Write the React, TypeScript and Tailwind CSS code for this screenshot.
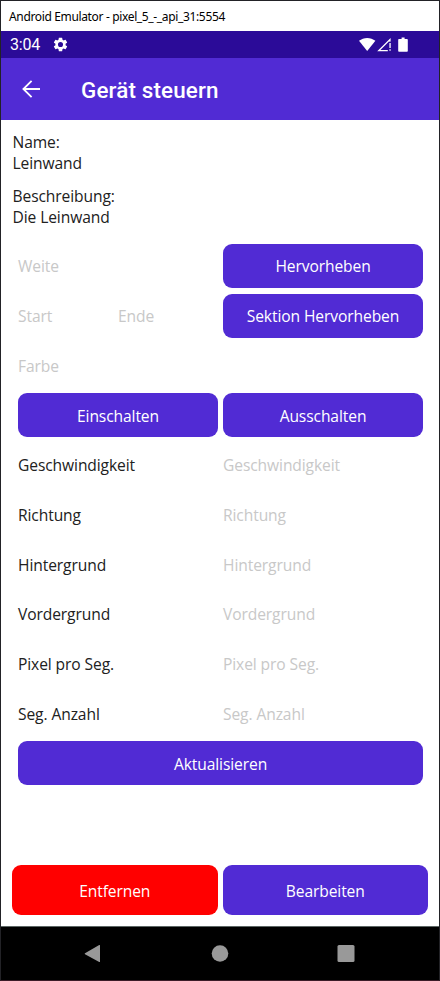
import type { ReactNode } from "react";

function Button({ children, className = "" }: { children: ReactNode; className?: string }) {
  return (
    <button className={`flex items-center justify-center rounded-[9px] pt-0.5 text-white ${className}`}>
      {children}
    </button>
  );
}

function Hint({ children }: { children: ReactNode }) {
  return <span className="flex-1 pt-0.5 text-[#c8c8c8]">{children}</span>;
}

const settings = [
  "Geschwindigkeit",
  "Richtung",
  "Hintergrund",
  "Vordergrund",
  "Pixel pro Seg.",
  "Seg. Anzahl",
];

function Row({ children }: { children: ReactNode }) {
  return <div className="grid h-[49.73px] grid-cols-2 items-center gap-[5px]">{children}</div>;
}

export default function App() {
  return (
    <div className="flex h-[981px] w-[440px] flex-col border border-[#222226] border-b-[#3b1c28] bg-white font-['Open_Sans','Noto_Sans',sans-serif] text-[15.6px] leading-[21px] tracking-[-0.1px] text-[#212121]">
      <div className="flex h-[30px] shrink-0 items-center pl-2 font-['Noto_Sans',sans-serif] text-[12px] tracking-[-0.35px] text-black">
        Android Emulator - pixel_5_-_api_31:5554
      </div>

      <div className="flex h-[27px] shrink-0 items-center bg-[#2b0b98] pl-[9px] pr-[30px] font-[Roboto,sans-serif] text-[16px] text-white">
        <span className="tracking-[-0.2px]">3:04</span>
        <svg className="ml-[12px] size-[17px]" viewBox="0 0 24 24" fill="currentColor">
          <path d="M19.14 12.94c.04-.3.06-.61.06-.94 0-.32-.02-.64-.07-.94l2.03-1.58a.49.49 0 0 0 .12-.61l-1.92-3.32a.488.488 0 0 0-.59-.22l-2.39.96c-.5-.38-1.03-.7-1.62-.94l-.36-2.54a.484.484 0 0 0-.48-.41h-3.84c-.24 0-.43.17-.47.41l-.36 2.54c-.59.24-1.13.57-1.62.94l-2.39-.96a.48.48 0 0 0-.59.22L2.74 8.87c-.12.21-.08.47.12.61l2.03 1.58c-.05.3-.09.63-.09.94s.02.64.07.94l-2.03 1.58a.49.49 0 0 0-.12.61l1.92 3.32c.12.22.37.29.59.22l2.39-.96c.5.38 1.03.7 1.62.94l.36 2.54c.05.24.24.41.48.41h3.84c.24 0 .44-.17.47-.41l.36-2.54c.59-.24 1.13-.56 1.62-.94l2.39.96c.22.08.47 0 .59-.22l1.92-3.32c.12-.22.07-.47-.12-.61l-2.01-1.58zM12 15.6A3.6 3.6 0 1 1 12 8.400a3.6 3.6 0 0 1 0 7.200z" />
        </svg>
        <svg className="ml-auto h-[15px] w-[50px]" viewBox="0 0 50 15" fill="currentColor">
          <path d="M0 3.8C4.7-.1 11.7-.1 16.4 3.8L8.2 14Z" />
          <path d="M31.6 1v3.5L30.4 5v-1L21.4 13h7.4v1.2H18.2Z" />
          <path d="M30.4 6h1.3v5h-1.3zM30.4 12.3h1.3v1.5h-1.3z" />
          <path d="M40 1.9h2.6V.5h3v1.4h2.4c.5 0 .8.3.8.8v11.2c0 .5-.3.8-.8.8h-8c-.5 0-.8-.3-.8-.8V2.7c0-.5.3-.8.8-.8Z" />
        </svg>
      </div>

      <div className="flex h-[62px] shrink-0 items-center bg-[#512bd4] pl-[21px] text-white">
        <svg className="mb-px size-[18px]" viewBox="0 0 18 18" fill="none" stroke="currentColor" strokeWidth="1.8">
          <path d="M18 9H1.6M9.6.8 1.4 9l8.2 8.2" />
        </svg>
        <h1 className="ml-[41px] mt-px font-[Roboto,sans-serif] text-[22.4px] font-medium leading-[26px] tracking-[0.15px]">
          Gerät steuern
        </h1>
      </div>

      <div className="flex min-h-0 flex-1 flex-col px-[11px]">
        <div className="pl-[0.5px] pt-[12px]">
          <p>Name:</p>
          <p>Leinwand</p>
        </div>
        <div className="pl-[0.5px] pt-[12px]">
          <p>Beschreibung:</p>
          <p>Die Leinwand</p>
        </div>

        <div className="mt-[13px] pl-[6px] pr-[5px]">
          <Row>
            <Hint>Weite</Hint>
            <Button className="h-[44px] bg-[#512bd4]">Hervorheben</Button>
          </Row>
          <Row>
            <div className="flex">
              <Hint>Start</Hint>
              <Hint>Ende</Hint>
            </div>
            <Button className="h-[44px] bg-[#512bd4]">Sektion Hervorheben</Button>
          </Row>
          <Row>
            <Hint>Farbe</Hint>
          </Row>
          <Row>
            <Button className="h-[44px] bg-[#512bd4]">Einschalten</Button>
            <Button className="h-[44px] bg-[#512bd4]">Ausschalten</Button>
          </Row>
          {settings.map((name) => (
            <Row key={name}>
              <span className="pt-0.5">{name}</span>
              <Hint>{name}</Hint>
            </Row>
          ))}
          <Row>
            <Button className="col-span-2 h-[44px] bg-[#512bd4]">Aktualisieren</Button>
          </Row>
        </div>

        <div className="mb-[11px] mt-auto grid grid-cols-2 gap-[5px]">
          <Button className="h-[50px] bg-[#ff0000]">Entfernen</Button>
          <Button className="h-[50px] bg-[#512bd4]">Bearbeiten</Button>
        </div>
      </div>

      <div className="flex h-[54px] shrink-0 items-center justify-center border-t border-[#5c6664] bg-black">
        <svg className="h-[20px] w-[272px]" viewBox="0 0 272 20" fill="#999999">
          <path d="M16 1.5v16q0 .9-.8.4L1 10.3q-.7-.5 0-1L15.2 1q.8-.4.8.5Z" />
          <circle cx="136" cy="9.5" r="8.3" />
          <rect x="253.5" y="1" width="17" height="17" rx="1.5" />
        </svg>
      </div>
    </div>
  );
}
